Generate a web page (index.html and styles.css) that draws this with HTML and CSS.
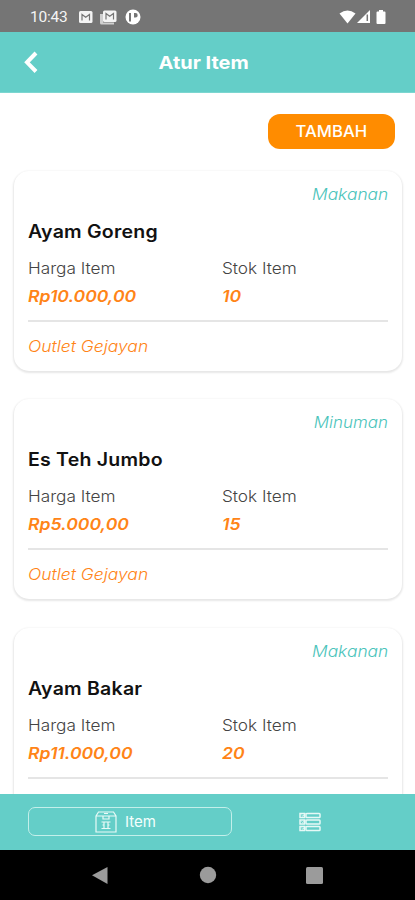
FILE: index.html
```html
<!DOCTYPE html>
<html lang="id">
<head>
<meta charset="utf-8">
<meta name="viewport" content="width=device-width, initial-scale=1">
<title>Atur Item</title>
<link rel="stylesheet" href="styles.css">
</head>
<body>
<div class="screen">
  <div class="status">
    <span class="time">10:43</span>
    <svg class="notices" width="64" height="16" viewBox="0 0 64 16">
      <rect x="1" y="2" width="13.500" height="12" rx="1.500" fill="#f4f4f4"/>
      <path d="M4 11.500V5.500l3.700 2.700 3.800-2.700v6" fill="none" stroke="#757575" stroke-width="1.200"/>
      <path d="M22 5h3v8.500h11v2H23.500Q22 15.500 22 14z" fill="#d0d0d0"/>
      <rect x="25" y="1.500" width="13.500" height="11.500" rx="1.500" fill="#f4f4f4"/>
      <path d="M28 10.500V4.500l3.700 2.700 3.800-2.700v6" fill="none" stroke="#757575" stroke-width="1.200"/>
      <circle cx="55" cy="8" r="7.500" fill="#fff"/>
      <path d="M51 4h2v8.500h-2zM56 4h1.500a2.200 2.200 0 0 1 0 4.400H56z" fill="#757575"/>
    </svg>
    <svg class="signals" width="50" height="16" viewBox="0 0 50 16">
      <path d="M.5 4.500Q8.500-1.500 16.500 4.500L8.500 14.500z" fill="#fff"/>
      <path d="M18 14 31 1v13z" fill="#fff"/>
      <path d="M28.300 5.500v6.500" stroke="#757575" stroke-width="1.500"/>
      <path d="M40 1h4v1.500h1.500q1 0 1 1V14q0 1-1 1h-7q-1 0-1-1V3.500q0-1 1-1H40z" fill="#fff"/>
    </svg>
  </div>
  <header class="header">
    <svg class="back" width="16" height="24" viewBox="0 0 16 24"><path d="M14 3 5 12.300l9 9.200" fill="none" stroke="#fff" stroke-width="4"/></svg>
    <h1><span>Atur Item</span></h1>
  </header>
  <main class="content">
    <button class="add"><span>TAMBAH</span></button>
    <article class="card">
      <div class="category"><span>Makanan</span></div>
      <h2><span>Ayam Goreng</span></h2>
      <div class="details">
        <div><div class="label"><span>Harga Item</span></div><div class="value"><span>Rp10.000,00</span></div></div>
        <div><div class="label"><span>Stok Item</span></div><div class="value"><span>10</span></div></div>
      </div>
      <div class="outlet"><span>Outlet Gejayan</span></div>
    </article>
    <article class="card">
      <div class="category narrow"><span>Minuman</span></div>
      <h2><span>Es Teh Jumbo</span></h2>
      <div class="details">
        <div><div class="label"><span>Harga Item</span></div><div class="value"><span>Rp5.000,00</span></div></div>
        <div><div class="label"><span>Stok Item</span></div><div class="value"><span>15</span></div></div>
      </div>
      <div class="outlet"><span>Outlet Gejayan</span></div>
    </article>
    <article class="card">
      <div class="category"><span>Makanan</span></div>
      <h2><span>Ayam Bakar</span></h2>
      <div class="details">
        <div><div class="label"><span>Harga Item</span></div><div class="value"><span>Rp11.000,00</span></div></div>
        <div><div class="label"><span>Stok Item</span></div><div class="value"><span>20</span></div></div>
      </div>
    </article>
  </main>
  <nav class="tabs">
    <div class="tab">
      <svg width="22" height="22" viewBox="0 0 22 22" fill="none" stroke="#e9faf7" stroke-width="1.200">
        <path d="M1 5 3.500 1h15L21 5v16H1zM1 5h20M8 5v3h6V5M9 2.500h4M6.500 11h9M6.500 17.500h9M9 11v6.500M13 11v6.500M7.500 14H9M13 14h1.500"/>
      </svg>
      <span>Item</span>
    </div>
    <svg class="list" width="22" height="20" viewBox="0 0 22 20" fill="none" stroke="#e6f9f6" stroke-width="1.500">
      <rect x="1" y="1.500" width="4.500" height="4"/><rect x="7" y="1.500" width="14" height="4" rx=".8"/>
      <rect x="1" y="8" width="4.500" height="4"/><rect x="7" y="8" width="14" height="4" rx=".8"/>
      <rect x="1" y="14.500" width="4.500" height="4"/><rect x="7" y="14.500" width="14" height="4" rx=".8"/>
      <path d="m2.500 3 1.200 1 3-2.500M2.500 9.500l1.200 1 3-2.500M2.500 16l1.200 1 3-2.500" stroke-width=".9"/>
    </svg>
  </nav>
  <div class="system">
    <svg width="415" height="50" viewBox="0 0 415 50" fill="#9b9b9b">
      <path d="M92 25.200 107.500 17v17z"/><circle cx="208" cy="25" r="8.200"/><rect x="306" y="17" width="17" height="17" rx="1.500"/>
    </svg>
  </div>
</div>
</body>
</html>
```
FILE: styles.css
```css
* { box-sizing: border-box; }
body { margin: 0; background: #fff; font-family: Inter, "Liberation Sans", sans-serif; }
h1, h2 { margin: 0; }
svg { display: block; flex: none; }
.screen { width: 415px; height: 900px; display: flex; flex-direction: column; overflow: hidden; }
.status { height: 32px; flex: none; background: #757575; color: #f4f4f4; display: flex; align-items: center; padding: 2px 26px 0 30px; }
.time { width: 48px; font: 400 15.5px/20px Roboto, sans-serif; letter-spacing: -.2px; }
.signals { margin-left: auto; }
.header { height: 61px; flex: none; background: #64cec8; color: #fff; display: grid; grid-template-columns: 62px 1fr 69px; align-items: center; border-bottom: 1px solid #7cd6d0; }
.back { margin-left: 22px; }
.header h1 { font-size: 18px; font-weight: 700; text-align: center; white-space: nowrap; }
.header h1 span { display: inline-block; transform: scaleX(1.11); }
.content { flex: 1; min-height: 0; overflow: hidden; padding: 21px 13px 0 14px; display: flex; flex-direction: column; }
.add { align-self: flex-end; flex: none; width: 127px; height: 35px; margin: 0 7px 21.6px 0; padding: 0; border: 0; border-radius: 12px; background: #ff8c00; color: #fff; font: 500 16px/35px Inter, sans-serif; }
.add span { display: inline-block; transform: scaleX(1.04); }
.card { height: 200px; flex: none; margin-bottom: 28.5px; padding: 11px 14px 0; border-radius: 15px; background: #fff; box-shadow: 0 1px 2px 1px #e7e7e7; white-space: nowrap; }
.card span { display: inline-block; transform-origin: left center; }
.category { height: 24px; text-align: right; color: #4bc4bb; font: italic 300 16px/24px Inter, sans-serif; }
.category span { transform: scaleX(1.085); transform-origin: right center; }
.category.narrow span { transform: scaleX(1.06); }
.card h2 { height: 24px; margin-top: 14px; color: #111; font-size: 18px; line-height: 24px; font-weight: 600; letter-spacing: .2px; }
.card h2 span { transform: scaleX(1.085); }
.details { height: 78px; display: grid; grid-template-columns: 194px 1fr; padding-top: 10px; border-bottom: 2px solid #e5e5e5; }
.label { height: 28px; color: #444; font-size: 16px; line-height: 28px; font-weight: 300; }
.label span { transform: scaleX(1.075); }
.value { height: 28px; color: #ff8417; font: italic 600 16px/28px Inter, sans-serif; }
.value span { transform: scaleX(1.1); }
.outlet { height: 48px; color: #ff8417; font: italic 300 16px/48px Inter, sans-serif; }
.outlet span { transform: scaleX(1.09); }
.tabs { height: 56px; flex: none; background: #64cec8; display: flex; align-items: center; padding: 0 0 1px 28px; }
.tab { width: 204px; height: 29px; border: 1.5px solid #c3efea; border-radius: 7px; display: flex; align-items: center; justify-content: center; gap: 8px; padding-right: 9px; color: #f4fffd; font-size: 15px; }
.list { margin-left: 67px; }
.system { height: 50px; flex: none; background: #000; }
```
